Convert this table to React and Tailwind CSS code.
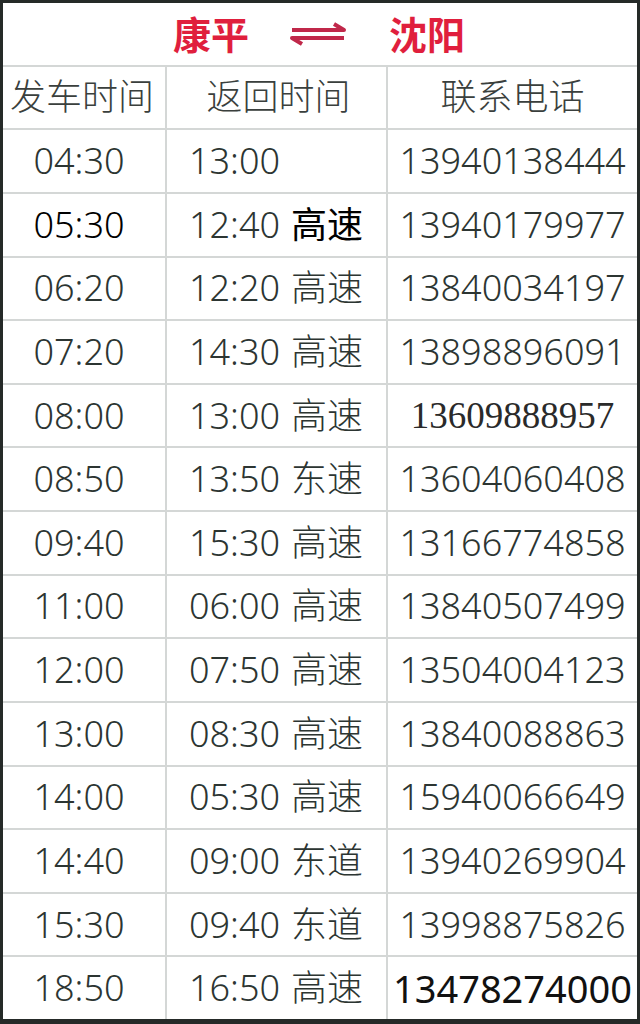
import React from "react";

const rows = [
  ["04:30", "13:00", "", "13940138444"],
  ["05:30", "12:40", "高速", "13940179977", "dark"],
  ["06:20", "12:20", "高速", "13840034197"],
  ["07:20", "14:30", "高速", "13898896091"],
  ["08:00", "13:00", "高速", "13609888957", "serif"],
  ["08:50", "13:50", "东速", "13604060408"],
  ["09:40", "15:30", "高速", "13166774858"],
  ["11:00", "06:00", "高速", "13840507499"],
  ["12:00", "07:50", "高速", "13504004123"],
  ["13:00", "08:30", "高速", "13840088863"],
  ["14:00", "05:30", "高速", "15940066649"],
  ["14:40", "09:00", "东道", "13940269904"],
  ["15:30", "09:40", "东道", "13998875826"],
  ["18:50", "16:50", "高速", "13478274000", "bold"],
];

const font = "font-['Noto_Sans','Noto_Sans_CJK_SC',sans-serif]";

const Arrow = () => (
  <svg width="58" height="26" viewBox="0 0 58 26" fill="none">
    <path d="M3 9 H55 L45 3" stroke="#c0284a" strokeWidth="4" strokeLinejoin="round" />
    <path d="M55 17 H3 L13 23" stroke="#c0284a" strokeWidth="4" strokeLinejoin="round" />
  </svg>
);

const App = () => {
  return (
    <div className="w-[640px] h-[1024px] bg-[#252a28] pt-[3px] px-[3px] pb-[5px]">
      <div className={`h-full bg-white flex flex-col text-[#2c3532] font-light ${font}`}>
        {/* Title */}
        <div className="flex-1 flex items-center justify-center gap-[40px] border-b-2 border-[#d4d7d6] pr-[2px]">
          <span className="text-[38px] font-bold text-[#e01f3d] leading-none">康平</span>
          <Arrow />
          <span className="text-[38px] font-bold text-[#e01f3d] leading-none ml-[2px]">沈阳</span>
        </div>

        {/* Header */}
        <div className="flex-1 grid grid-cols-[164px_221px_1fr] border-b-2 border-[#d4d7d6] text-[36px] text-[#3a3f3d]">
          <div className="flex items-center justify-center pr-[4px] border-r-2 border-[#d4d7d6]">发车时间</div>
          <div className="flex items-center justify-center pl-[4px] border-r-2 border-[#d4d7d6]">返回时间</div>
          <div className="flex items-center justify-center">联系电话</div>
        </div>

        {rows.map(([go, back, note, phone, kind], i) => (
          <div
            key={i}
            className={`flex-1 grid grid-cols-[164px_221px_1fr] text-[36px] leading-none ${
              i < rows.length - 1 ? "border-b-2 border-[#d4d7d6]" : ""
            }`}
          >
            <div
              className={`flex items-center justify-center pr-[10px] border-r-2 border-[#d4d7d6] ${
                kind === "dark" ? "text-black" : ""
              }`}
            >
              {go}
            </div>
            <div className="flex items-center pl-[22px] border-r-2 border-[#d4d7d6]">
              <span>{back}</span>
              {note && (
                <span className={`ml-[11px] ${kind === "dark" ? "text-black font-normal" : ""}`}>{note}</span>
              )}
            </div>
            <div
              className={`flex items-center justify-center ${
                kind === "serif"
                  ? "font-['Liberation_Serif',serif] font-normal text-[37px] text-[#2a2a2a]"
                  : kind === "bold"
                  ? "text-[38px] font-normal text-[#111]"
                  : ""
              }`}
            >
              {phone}
            </div>
          </div>
        ))}
      </div>
    </div>
  );
};

export default App;
